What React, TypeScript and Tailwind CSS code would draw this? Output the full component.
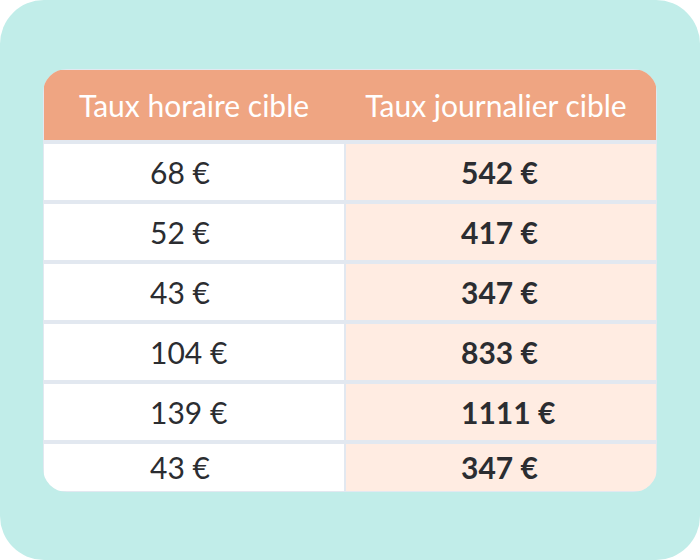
const rows = [
  { hourly: "68 €", daily: "542 €" },
  { hourly: "52 €", daily: "417 €" },
  { hourly: "43 €", daily: "347 €" },
  { hourly: "104 €", daily: "833 €" },
  { hourly: "139 €", daily: "1111 €" },
  { hourly: "43 €", daily: "347 €" },
];

export default function App() {
  return (
    <div className="w-[700px] h-[560px] bg-white font-['Lato','Liberation_Sans',sans-serif]">
      <div className="h-full rounded-[44px] bg-[#c1ede9] pt-[69px] px-[43px]">
        {/* Table card */}
        <div className="rounded-[24px] overflow-hidden bg-[#e2e8f0] p-px flex flex-col gap-[4px]">
          <div className="flex h-[70px] bg-[#efa582] text-white text-[30px]">
            <div className="w-[300px] flex items-center justify-center">Taux horaire cible</div>
            <div className="flex-1 flex items-center justify-center pr-[8px]">Taux journalier cible</div>
          </div>
          <div className="grid grid-cols-[300px_1fr] gap-x-[2px] gap-y-[4px] text-[30px] text-[#2b2d31]">
            {rows.map((r, i) => {
              const h = i === rows.length - 1 ? "h-[47px]" : "h-[56px]";
              return [
                <div key={`h${i}`} className={`${h} bg-white flex items-center pl-[106px]`}>
                  {r.hourly}
                </div>,
                <div key={`d${i}`} className={`${h} bg-[#ffece2] flex items-center pl-[115px] font-bold`}>
                  {r.daily}
                </div>,
              ];
            })}
          </div>
        </div>
      </div>
    </div>
  );
}
